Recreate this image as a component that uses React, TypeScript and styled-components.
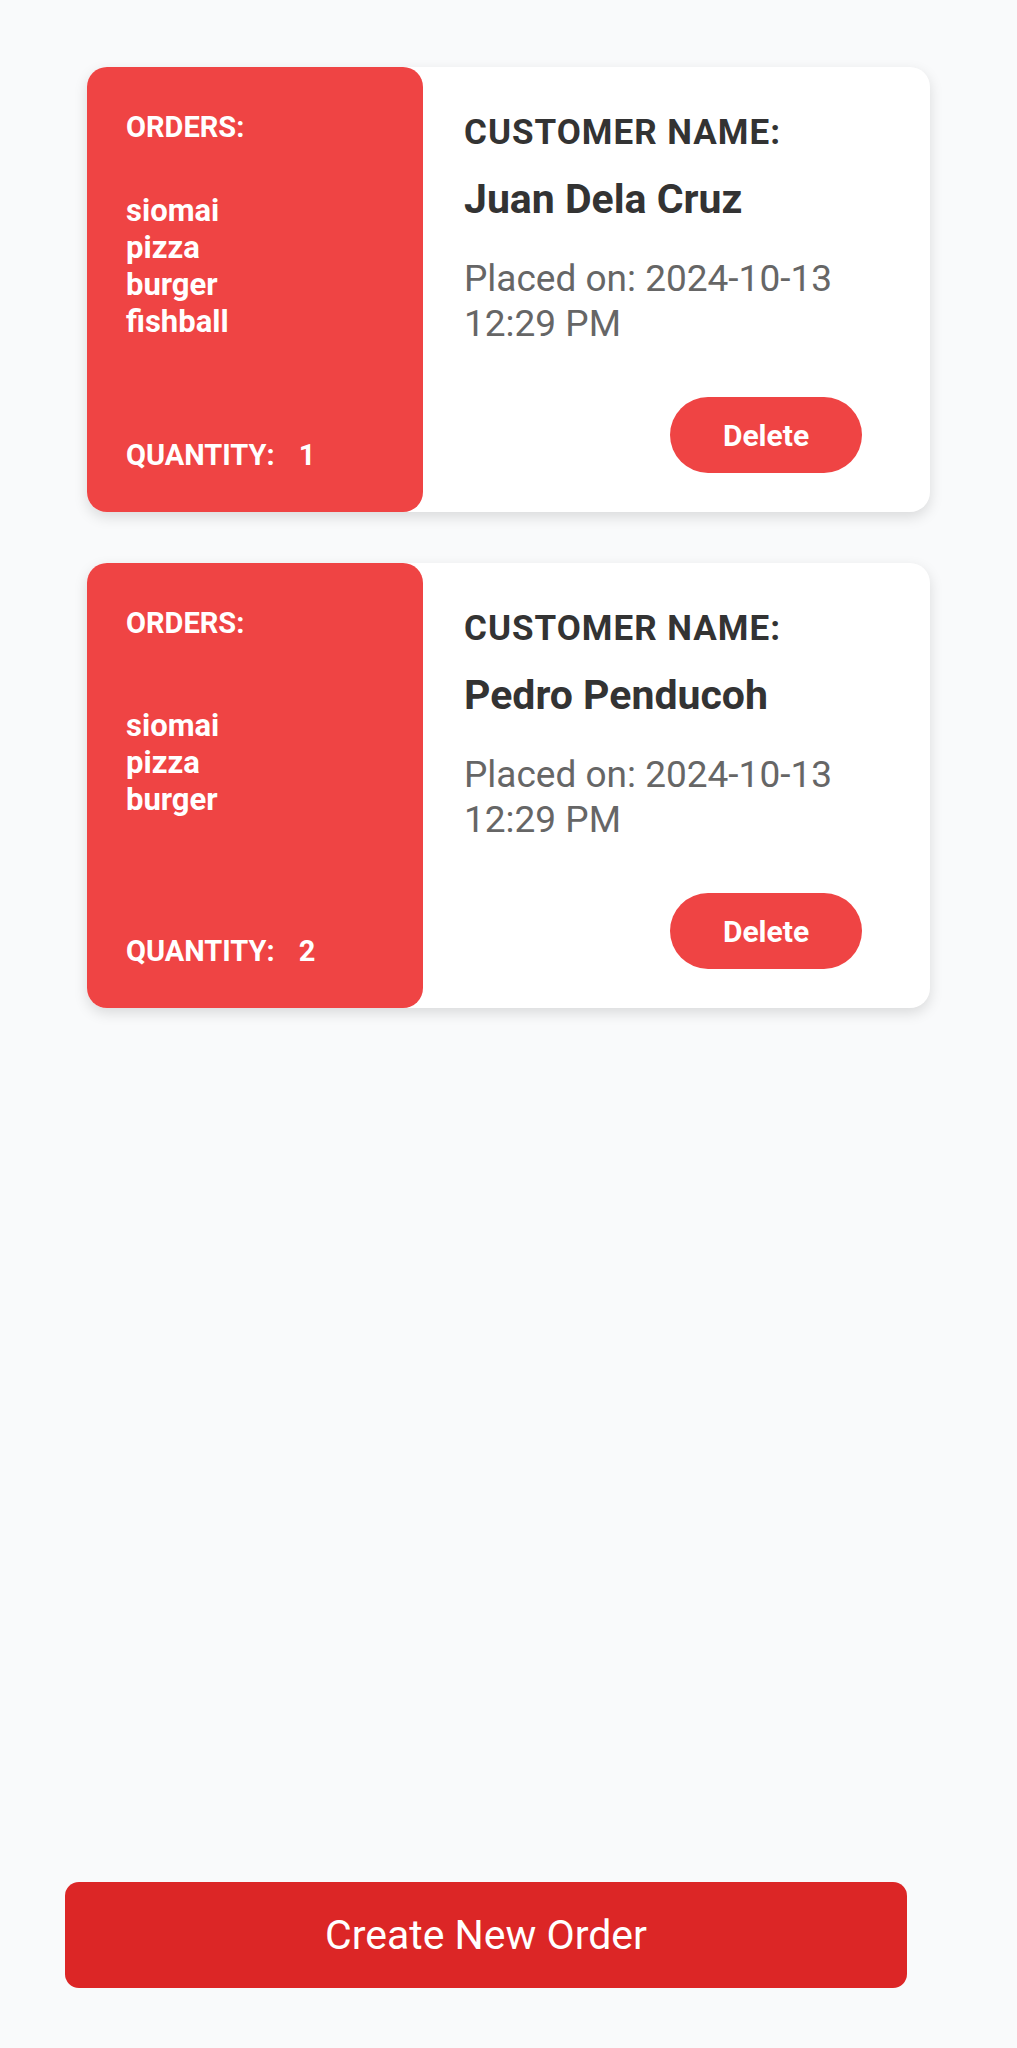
import React from 'react';
import styled, { createGlobalStyle } from 'styled-components';

const GlobalStyle = createGlobalStyle`
    html, body {
        margin: 0;
        padding: 0;
        background: #f9fafb;
        font-family: Roboto, "Liberation Sans", Arial, sans-serif;
    }
    * { box-sizing: border-box; }
`;

interface Order {
    id: number;
    customer: string;
    items: string[];
    quantity: number;
    placedOn: string;
}

const orders: Order[] = [
    {
        id: 1,
        customer: 'Juan Dela Cruz',
        items: ['siomai', 'pizza', 'burger', 'fishball'],
        quantity: 1,
        placedOn: '2024-10-13 12:29 PM',
    },
    {
        id: 2,
        customer: 'Pedro Penducoh',
        items: ['siomai', 'pizza', 'burger'],
        quantity: 2,
        placedOn: '2024-10-13 12:29 PM',
    },
];

const Page = styled.div`
    display: flex;
    flex-direction: column;
    min-height: 100vh;
    padding: 67px 0 60px;
`;

const OrderList = styled.div`
    display: flex;
    flex-direction: column;
    gap: 51px;
    width: 843px;
    margin: 0 auto;
`;

const Card = styled.div`
    display: flex;
    height: 445px;
    background: #ffffff;
    border-radius: 20px;
    box-shadow: 0 5px 14px rgba(0, 0, 0, 0.13);
`;

const OrdersPanel = styled.div`
    display: flex;
    flex-direction: column;
    justify-content: space-between;
    width: 336px;
    padding: 43px 20px 40px 39px;
    background: #ef4444;
    border-radius: 20px;
    color: #ffffff;
`;

const PanelLabel = styled.div`
    font-size: 29px;
    line-height: 34px;
    font-weight: 700;
`;

const ItemList = styled.div`
    display: flex;
    flex-direction: column;
    margin-bottom: 50px;
    font-size: 31px;
    line-height: 37px;
    font-weight: 700;
`;

const QuantityValue = styled.span`
    margin-left: 24px;
`;

const Details = styled.div`
    display: flex;
    flex: 1;
    flex-direction: column;
    padding: 47px 68px 39px 41px;
    color: #333333;
`;

const DetailLabel = styled.div`
    font-size: 35px;
    line-height: 38px;
    font-weight: 700;
    letter-spacing: 1px;
`;

const CustomerName = styled.div`
    margin-top: 23px;
    font-size: 41px;
    line-height: 48px;
    font-weight: 700;
`;

const PlacedOn = styled.div`
    margin-top: 33px;
    font-size: 37px;
    line-height: 45px;
    color: #666666;
`;

const DeleteButton = styled.button`
    align-self: flex-end;
    margin-top: auto;
    width: 192px;
    height: 76px;
    border: none;
    border-radius: 38px;
    background: #ef4444;
    color: #ffffff;
    font-family: inherit;
    font-size: 30px;
    font-weight: 700;
    cursor: pointer;
`;

const CreateButton = styled.button`
    margin: auto 0 0 65px;
    width: 842px;
    height: 106px;
    border: none;
    border-radius: 14px;
    background: #dc2626;
    color: #ffffff;
    font-family: inherit;
    font-size: 41px;
    font-weight: 400;
    cursor: pointer;
`;

function OrderCard({ order }: { order: Order }): JSX.Element {
    return (
        <Card>
            <OrdersPanel>
                <PanelLabel>ORDERS:</PanelLabel>
                <ItemList>
                    {order.items.map((item) => <span key={item}>{item}</span>)}
                </ItemList>
                <PanelLabel>
                    QUANTITY:
                    <QuantityValue>{order.quantity}</QuantityValue>
                </PanelLabel>
            </OrdersPanel>
            <Details>
                <DetailLabel>CUSTOMER NAME:</DetailLabel>
                <CustomerName>{order.customer}</CustomerName>
                <PlacedOn>
                    Placed on:
                    {' '}
                    {order.placedOn}
                </PlacedOn>
                <DeleteButton>Delete</DeleteButton>
            </Details>
        </Card>
    );
}

export default function App(): JSX.Element {
    return (
        <>
            <GlobalStyle />
            <Page>
                <OrderList>
                    {orders.map((order) => <OrderCard key={order.id} order={order} />)}
                </OrderList>
                <CreateButton>Create New Order</CreateButton>
            </Page>
        </>
    );
}
